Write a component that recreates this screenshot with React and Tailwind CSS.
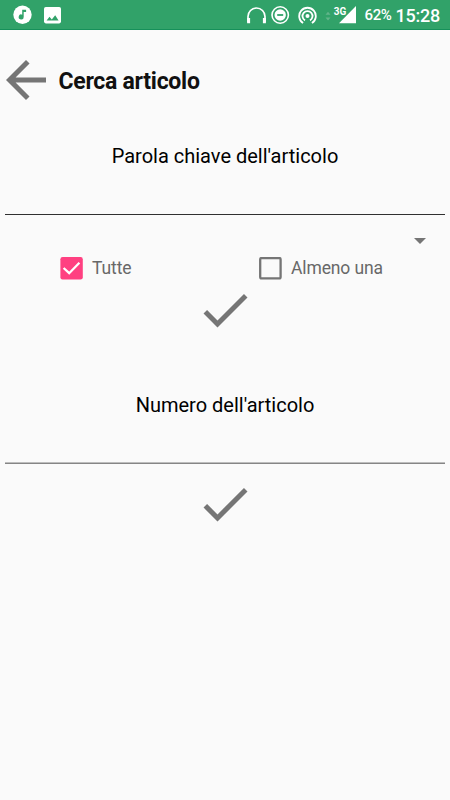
function MusicIcon() {
  return (
    <svg className="h-[19px] w-[19px]" viewBox="0 0 19 19">
      <circle cx="9.5" cy="9.8" r="9.2" fill="#fff" />
      <path d="M9.2 4.8h3.9v2.1h-2.4v5.1a2.5 2.5 0 1 1-1.5-2.3z" fill="#31a269" />
    </svg>
  );
}

function ImageIcon() {
  return (
    <svg className="h-[17px] w-[17px]" viewBox="0 0 17 17">
      <rect width="17" height="16.4" rx="1.8" fill="#fff" />
      <path d="M2.6 13.5l2.9-3.7 2.3 2.6 3.4-4.2 3.4 5.3z" fill="#31a269" />
    </svg>
  );
}

function HeadphonesIcon() {
  return (
    <svg className="h-[17px] w-[19px]" viewBox="0 0 19 17" fill="none" stroke="#fff">
      <path d="M1 15V9.5a8.5 8.5 0 0 1 17 0V15" strokeWidth="1.7" />
      <path d="M1.6 11v5.2M17.4 11v5.2" strokeWidth="3" />
    </svg>
  );
}

function DisturbIcon() {
  return (
    <svg className="h-[19px] w-[19px]" viewBox="0 0 19 19">
      <circle cx="9.2" cy="10" r="8.2" fill="none" stroke="#fff" strokeWidth="1.6" />
      <circle cx="9.2" cy="10" r="5.7" fill="#fff" />
      <path d="M6.2 10h6" stroke="#31a269" strokeWidth="1.8" />
    </svg>
  );
}

function HotspotIcon() {
  return (
    <svg className="h-[19px] w-[19px]" viewBox="0 0 19 19" fill="none" stroke="#fff" strokeWidth="1.8">
      <circle cx="9.5" cy="11" r="2" fill="#fff" stroke="none" />
      <path d="M7 15.4a5 5 0 1 1 5 0" />
      <path d="M5.1 18.1a8.3 8.3 0 1 1 8.8 0" />
    </svg>
  );
}

function SignalIcon() {
  return (
    <svg className="h-[24px] w-[33px]" viewBox="0 0 33 24">
      <path d="M1.5 11.7L4 8.7l2.5 3zM1.5 14.5L4 17.5l2.5-3z" fill="#62b58a" />
      <path d="M32 3V20.3H15z" fill="#fff" />
      <text
        x="9.8"
        y="11.6"
        className="font-[Roboto,sans-serif] text-[11.5px] font-bold"
        fill="#fff"
        stroke="#31a269"
        strokeWidth="2"
        paintOrder="stroke"
        textLength="12.5"
        lengthAdjust="spacingAndGlyphs"
      >
        3G
      </text>
    </svg>
  );
}

function BackArrow() {
  return (
    <svg className="h-10 w-10" viewBox="4 4 16 16" fill="#757575">
      <path d="M20 11H7.83l5.59-5.59L12 4l-8 8 8 8 1.41-1.41L7.83 13H20v-2z" />
    </svg>
  );
}

function ConfirmButton() {
  return (
    <button className="mx-auto block h-[60px] w-[60px]">
      <svg className="h-[60px] w-[60px]" viewBox="0 0 24 24" fill="#757575">
        <path d="M9 16.17L4.83 12l-1.42 1.41L9 19 21 7l-1.41-1.41z" />
      </svg>
    </button>
  );
}

function Checkbox({ checked, label }) {
  return (
    <label className="flex items-center gap-[9px]">
      <svg className="h-[23px] w-[23px]" viewBox="0 0 23 23">
        {checked ? (
          <>
            <rect x="0.4" y="0" width="22.4" height="22.4" rx="2.2" fill="#ff4081" />
            <path d="M3.6 11l5.6 5.2L19.4 5.8" fill="none" stroke="#fff" strokeWidth="2.3" />
          </>
        ) : (
          <rect x="1.2" y="1" width="20.4" height="20.4" rx="1.4" fill="none" stroke="#757575" strokeWidth="2.3" />
        )}
      </svg>
      <span className="text-[17.5px] leading-6 tracking-[-0.12px] text-[#686868]">{label}</span>
    </label>
  );
}

export default function App() {
  return (
    <div className="h-[800px] w-[450px] overflow-hidden bg-[#fafafa] font-[Roboto,sans-serif] text-black">
      <div className="flex h-[30px] items-center border-b border-[#16905a] bg-[#31a269] pl-[13px] text-white">
        <MusicIcon />
        <div className="ml-3 pt-px"><ImageIcon /></div>
        <div className="ml-[186px] flex items-center">
          <div className="pt-px"><HeadphonesIcon /></div>
          <div className="ml-[5px]"><DisturbIcon /></div>
          <div className="ml-2"><HotspotIcon /></div>
          <div className="ml-[7px]"><SignalIcon /></div>
        </div>
        <span className="ml-[7.5px] whitespace-nowrap pt-[2px] text-[15px] font-medium tracking-[-0.4px]">62%</span>
        <span className="ml-1 whitespace-nowrap pt-px text-[18px] font-medium tracking-[-0.2px]">15:28</span>
      </div>

      <header className="flex h-[100px] items-center pl-1.5">
        <BackArrow />
        <h1 className="ml-[12.5px] pt-[3px] text-[23px] font-bold leading-8 tracking-[-0.27px] text-[#111]">Cerca articolo</h1>
      </header>

      <section>
        <h2 className="pt-[11px] text-center text-[20px] leading-[30px]">Parola chiave dell'articolo</h2>
        <div className="mx-[5px] h-[44px] border-b border-[#303030]" />
        <div className="flex h-[41px] items-end justify-end pr-6">
          <svg className="mb-[12px] h-[6px] w-[12px]" viewBox="0 0 12 6">
            <path d="M0 0h12L6 6z" fill="#757575" />
          </svg>
        </div>
        <div className="flex h-6 items-center pl-[60px]">
          <div className="w-[199px]"><Checkbox checked label="Tutte" /></div>
          <Checkbox label="Almeno una" />
        </div>
        <ConfirmButton />
      </section>

      <section className="pt-[49px]">
        <h2 className="pt-px text-center text-[20px] leading-[30px]">Numero dell'articolo</h2>
        <div className="mx-[5px] h-[43px] border-b border-[#bdbdbd]" />
        <div className="mx-[5px] h-px bg-[#858585]" />
        <div className="pt-[10px]"><ConfirmButton /></div>
      </section>
    </div>
  );
}
